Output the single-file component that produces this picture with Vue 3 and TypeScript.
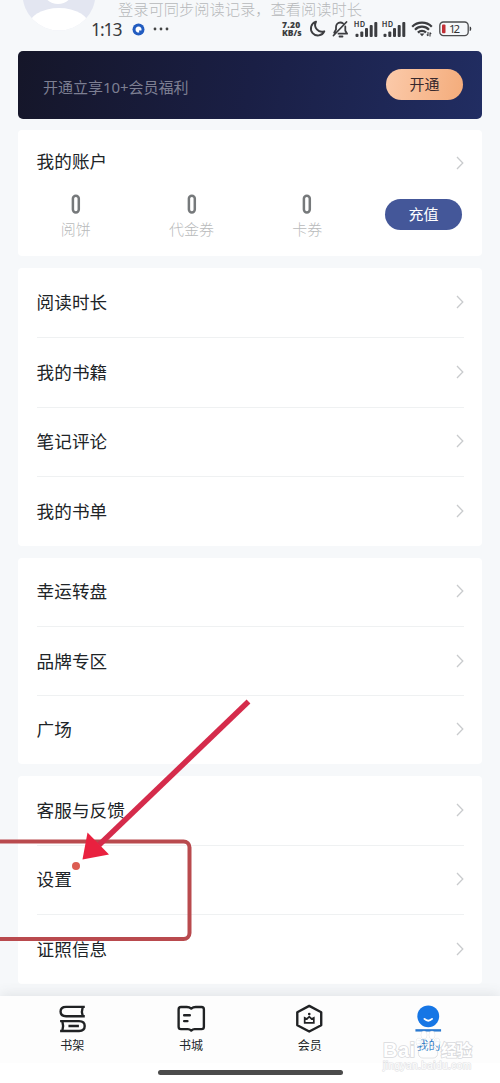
<script setup lang="ts">
interface Row {
  label: string
  dot?: boolean
}
interface Group {
  id: string
  rows: Row[]
}

const groups: Group[] = [
  { id: 'reading', rows: [{ label: '阅读时长' }, { label: '我的书籍' }, { label: '笔记评论' }, { label: '我的书单' }] },
  { id: 'explore', rows: [{ label: '幸运转盘' }, { label: '品牌专区' }, { label: '广场' }] },
  { id: 'support', rows: [{ label: '客服与反馈' }, { label: '设置', dot: true }, { label: '证照信息' }] },
]
const balances: string[] = ['阅饼', '代金券', '卡券']
const signals: number[] = [0, 1]
</script>

<template>
  <div class="screen">
    <header class="top">
      <svg class="avatar" width="74" height="31" viewBox="0 0 74 31">
        <defs><clipPath id="face"><circle cx="37" cy="-6" r="36.5" /></clipPath></defs>
        <g clip-path="url(#face)">
          <rect y="-43" width="74" height="74" fill="#e3e6f1" />
          <circle cx="36" cy="-12" r="16" fill="#fff" />
          <ellipse cx="37" cy="27" rx="31" ry="19" fill="#fff" />
        </g>
      </svg>
      <p class="hint">登录可同步阅读记录，查看阅读时长</p>
      <div class="status">
        <span class="clock">1:13</span>
        <svg class="app-dot" width="13" height="13" viewBox="0 0 13 13">
          <circle cx="6.5" cy="6.5" r="6" fill="#225cc0" />
          <path d="M6.5 3.5a3 3 0 1 0 .8 5.9L7 7.500h2.400A3 3 0 0 0 6.500 3.500Z" fill="#fff" />
        </svg>
        <svg class="more" width="16" height="4" viewBox="0 0 16 4" fill="#444">
          <circle cx="2" cy="2" r="1.4" /><circle cx="8" cy="2" r="1.4" /><circle cx="14" cy="2" r="1.4" />
        </svg>
        <span class="speed"><b>7.20</b><b>KB/s</b></span>
        <svg class="moon" width="17" height="18" viewBox="0 0 17 18">
          <path d="M7 1.7A7 7 0 1 0 15.3 11.3 6.8 6.8 0 0 1 7 1.7Z" fill="none" stroke="#3c3d40" stroke-width="1.9" stroke-linejoin="round" />
        </svg>
        <svg class="bell" width="17" height="18" viewBox="0 0 17 18" fill="none" stroke="#3c3d40" stroke-width="1.8" stroke-linecap="round" stroke-linejoin="round">
          <path d="M14.500 2 1.500 15.500M4 9.500V7.2C4 4.3 5.8 2.5 8.3 2.5c1 0 2 .3 2.7.9M13.3 6.5v4.2l1.8 3H6.5M4 9.500l-1.8 3.300M7.5 16.500h3" />
        </svg>
        <svg v-for="n in signals" :key="n" class="signal" width="24" height="17" viewBox="0 0 24 17">
          <text x="0" y="5.800" font-size="7" font-weight="700" fill="#3c3d40" textLength="11">HD</text>
          <g fill="#3c3d40">
            <rect x="1.5" y="12.8" width="3" height="3.2" rx="1" /><rect x="6.3" y="10.5" width="3" height="5.5" rx="1" />
            <rect x="11" y="7" width="3" height="9" rx="1" /><rect x="15.7" y="4" width="3" height="12" rx="1" />
            <rect x="20.3" y="1" width="3" height="15" rx="1" />
          </g>
        </svg>
        <svg class="wifi" width="22" height="18" viewBox="0 0 22 18" fill="none" stroke="#3c3d40" stroke-width="2.2">
          <path d="M1.2 6.7C6.5 1.3 15.500 1.3 20.800 6.700M4 9.700C8 5.700 14 5.700 18 9.700M6.900 12.600C9.300 10.200 12.700 10.200 15 12.600" />
          <path d="m8.500 13.500 2.500 2.800 2.500-2.800Z" fill="#3c3d40" stroke="none" />
          <path d="M17 12v4M19 12.500v4M15.800 14.500l1.200 1.500M20.200 14l-1.200-1.500" stroke-width="1.100" />
        </svg>
        <svg class="battery" width="33" height="16" viewBox="0 0 33 16">
          <rect x=".8" y="1" width="28.400" height="13.600" rx="3.600" fill="none" stroke="#4b4c4e" stroke-width="1.300" />
          <rect x="3" y="3.500" width="3.500" height="8.700" rx="1" fill="#c22f35" />
          <path d="M30.700 5.500q1.600 0 1.600 2.300t-1.600 2.300Z" fill="#3c3d40" />
          <text x="10" y="12" font-size="11.500" fill="#333" textLength="11">12</text>
        </svg>
      </div>
    </header>

    <main class="content">
      <section class="vip">
        <span class="vip-text">开通立享10+会员福利</span>
        <button class="pill open">开通</button>
      </section>

      <section class="card account">
        <div class="account-head">
          <span class="title">我的账户</span>
          <svg class="chevron" width="8" height="14" viewBox="0 0 8 14"><path d="m1 1 5.800 6L1 13" /></svg>
        </div>
        <div class="account-body">
          <div v-for="name in balances" :key="name" class="balance">
            <svg width="10" height="20" viewBox="0 0 10 20"><rect x="1.900" y="1.700" width="5.900" height="16.800" rx="2.900" fill="none" stroke="#76797b" stroke-width="2.500" /></svg>
            <span>{{ name }}</span>
          </div>
          <button class="pill charge">充值</button>
        </div>
      </section>

      <section v-for="g in groups" :key="g.id" class="card list" :class="g.id">
        <div v-for="r in g.rows" :key="r.label" class="row">
          <span class="title">{{ r.label }}<i v-if="r.dot" class="dot"></i></span>
          <svg class="chevron" width="8" height="14" viewBox="0 0 8 14"><path d="m1 1 5.800 6L1 13" /></svg>
        </div>
      </section>
    </main>

    <nav class="tabs">
      <div class="tab">
        <svg width="30" height="30" viewBox="0 0 30 30" fill="none" stroke="#202224" stroke-width="2.500" stroke-linejoin="round">
          <path d="M28.200 2.500H8.500C4.500 2.500 2.700 4.600 2.700 7.500s1.800 4.900 5.800 4.900h19.700M26 2.800q-1.600 4.700 0 9.300" transform="translate(0 .5)" />
          <path d="M2.200 18h20c4 0 5.900 2 5.900 5.200s-1.900 5.200-5.900 5.200h-20M4.600 18.300q1.600 5 0 9.800M11 23.200h11" />
        </svg>
        <span>书架</span>
      </div>
      <div class="tab">
        <svg width="30" height="30" viewBox="0 0 30 30" fill="none" stroke="#202224" stroke-width="2.500" stroke-linejoin="round" stroke-linecap="round">
          <path d="M15 4.800c-1.500-1.300-2.700-1.600-4.700-1.600H4.200c-1.600 0-2.500 1-2.500 2.500V24c0 1.600.9 2.500 2.500 2.500h7.300c1.500 0 2.300.4 3.500 1.500 1.200-1.100 2-1.500 3.500-1.500h7.300c1.600 0 2.500-.9 2.500-2.500V5.700c0-1.500-.9-2.500-2.500-2.500h-6.100c-2 0-3.200.3-4.700 1.600ZM7.500 11.800h6M7.500 18h3.500" />
        </svg>
        <span>书城</span>
      </div>
      <div class="tab">
        <svg width="30" height="30" viewBox="0 0 30 30" fill="none" stroke="#202224" stroke-width="2.500" stroke-linejoin="round">
          <path d="M15 2 27.600 8.700v13.600L15 29 2.400 22.300V8.700Z" />
          <path d="M10.200 14.500v5.300h9.600v-5.300l-2.400 1.200-2.400-2.400-2.400 2.400Z" stroke-width="1.800" stroke-linejoin="miter" /><circle cx="15" cy="10.500" r="1.400" fill="#202224" stroke="none" />
        </svg>
        <span>会员</span>
      </div>
      <div class="tab active">
        <svg width="30" height="30" viewBox="0 0 30 30">
          <circle cx="15" cy="13" r="11.500" fill="#1676e5" />
          <path d="M11 15.700q4 3.800 8 0" fill="none" stroke="#fff" stroke-width="2" stroke-linecap="round" />
          <rect x="1.500" y="26.500" width="27" height="2.500" fill="#2a79d0" />
        </svg>
        <span>我的</span>
      </div>
    </nav>
    <div class="home-area"><i></i></div>

    <svg class="overlay" width="500" height="1083" viewBox="0 0 500 1083">
      <rect x="-12" y="841.500" width="201.500" height="97.500" rx="6" fill="none" stroke="#b94a4e" stroke-width="4" />
      <path d="M248.500 701.500 99 845" stroke="#d52b4b" stroke-width="5.500" />
      <path d="M82.500 859.500 87.500 832.500 109 854.500Z" fill="#e9213f" />
      <g class="mark">
        <text x="383" y="1057" font-size="20" textLength="32">Bai</text>
        <text x="441" y="1056" font-size="16" textLength="31">经验</text>
        <text x="383" y="1069" font-size="10" textLength="88" class="site">jingyan.baidu.com</text>
        <g class="paw">
          <ellipse cx="419" cy="1042" rx="2.800" ry="3.800" /><ellipse cx="424" cy="1035" rx="2.800" ry="3.800" />
          <ellipse cx="432" cy="1035" rx="2.800" ry="3.800" /><ellipse cx="437" cy="1042" rx="2.800" ry="3.800" />
          <path d="M428 1043c-4 0-5 4-8 6-3 3-2 9 3 9h10c5 0 6-6 3-9-3-2-4-6-8-6Z" class="palm" />
        </g>
        <text x="421" y="1056.500" font-size="10" textLength="14" class="du">du</text>
      </g>
    </svg>
  </div>
</template>

<style>
body { margin: 0; }
</style>

<style scoped>
.screen {
  position: relative;
  width: 500px;
  height: 1083px;
  overflow: hidden;
  display: flex;
  flex-direction: column;
  background: #f6f8fa;
  color: #202427;
  font-family: "Noto Sans CJK SC", "Noto Sans", sans-serif;
}
.top { position: relative; height: 51px; flex: none; }
.avatar { position: absolute; left: 22px; top: 0; }
.hint {
  position: absolute;
  left: 118px;
  top: 0;
  margin: 0;
  font-size: 15.25px;
  line-height: 17px;
  color: #b7b9bb;
  font-weight: 300;
  white-space: nowrap;
}
.status {
  position: absolute;
  left: 91px;
  top: 18px;
  width: 382px;
  height: 22px;
  display: flex;
  align-items: center;
}
.status svg { flex: none; }
.clock { width: 41px; font-size: 17.500px; line-height: 22px; color: #3a3b3d; font-family: "Noto Sans", sans-serif; letter-spacing: -1.100px; }
.more { margin-left: 8px; }
.speed { display: flex; flex-direction: column; width: 27px; margin-left: 113px; font: 700 8.500px/8px "Open Sans", sans-serif; color: #3c3d40; align-items: flex-start; white-space: nowrap; }
.speed b:first-child { letter-spacing: .3px; }
.moon { margin-left: 0; }
.bell { margin-left: 6px; }
.signal { margin-left: 4px; font-family: Inter, sans-serif; overflow: visible; }
.bell + .signal { margin-left: 5px; }
.wifi { margin-left: 5px; }
.battery { margin-left: 6px; font-family: "Noto Sans", sans-serif; }
.content { display: flex; flex-direction: column; gap: 12px; padding: 0 18px; height: 945px; flex: none; box-sizing: border-box; }
.vip {
  height: 67.500px;
  margin-bottom: -.5px;
  border-radius: 5px;
  flex: none;
  box-sizing: border-box;
  padding: 0 19px 0 25px;
  display: flex;
  align-items: center;
  justify-content: space-between;
  background: linear-gradient(100deg, #151629 0%, #1a1f45 50%, #212d62 100%);
}
.vip-text { font-size: 15px; line-height: 20px; color: #7d7f92; padding-top: 4px; font-family: "Noto Sans", "Noto Sans CJK SC", sans-serif; letter-spacing: -.03px; }
.pill {
  border: 0;
  padding: 0;
  width: 77px;
  height: 31px;
  border-radius: 16px;
  font-family: inherit;
  font-size: 15px;
  line-height: 29px;
}
.open { background: linear-gradient(100deg, #fbcaaa, #f4ac7b); color: #38292d; padding-bottom: 2px; margin-top: -1px; }
.charge { position: absolute; right: 20px; top: 69px; background: #445799; color: #fff; padding-bottom: 2px; }
.card { background: #fff; border-radius: 4px; flex: none; }
.account { position: relative; height: 126px; box-sizing: border-box; padding: 17px 18px 0 19px; }
.account-head { display: flex; justify-content: space-between; align-items: center; height: 28px; }
.account-head .chevron { margin-top: 3px; }
.account-body { display: flex; margin-top: 19px; margin-left: -19px; }
.balance { width: 115.700px; display: flex; flex-direction: column; align-items: center; }
.balance svg { display: block; }
.balance span { margin-top: 3px; font-size: 15px; line-height: 24px; color: #b8babb; font-weight: 300; }
.title { position: relative; font-size: 17.600px; line-height: 26px; letter-spacing: .1px; }
.list { padding: 0 18px 0 19px; }
.row { height: 69.400px; box-sizing: border-box; display: flex; align-items: center; justify-content: space-between; padding-bottom: 1.500px; }
.row + .row { border-top: 1px solid #eff1f2; }
.explore .row { height: 68.800px; }
.support .row { height: 69.200px; }
.account .title, .row .title { margin-left: -.5px; }
.chevron { fill: none; stroke: #c9cbcd; stroke-width: 1.300; flex: none; }
.dot { position: absolute; left: 35px; top: -4px; width: 8px; height: 8px; border-radius: 50%; background: #dc5c52; }
.tabs {
  height: 67px;
  flex: none;
  box-sizing: border-box;
  padding: 0 13px 0 13px;
  display: grid;
  grid-template-columns: repeat(4, 118.700px);
  background: #fdfdfd;
  box-shadow: 0 -2px 12px rgba(70, 80, 90, .12);
}
.tab { display: flex; flex-direction: column; align-items: center; padding-top: 8px; font-size: 12px; line-height: 20px; }
.tab svg { flex: none; display: block; width: 28.500px; height: 28.500px; overflow: visible; }
.tab span { margin-top: 2px; color: inherit; }
.tab.active { color: #2a79c5; }
.home-area { height: 20px; background: #fff; display: flex; justify-content: center; position: relative; }
.home-area i { width: 185px; height: 5px; border-radius: 3px; background: #4b4b4b; margin-top: 7px; }
.overlay { position: absolute; left: 0; top: 0; pointer-events: none; }
.mark { fill: #fff; stroke: #d8d9dc; stroke-width: 1.600; paint-order: stroke; font-family: "Liberation Sans", "Noto Sans CJK SC", sans-serif; font-weight: 700; }
.mark .site { stroke: #e1e2e4; stroke-width: 1.200; font-weight: 400; }
.mark .paw { stroke-width: .8; fill-opacity: .9; }
.mark .palm { fill-opacity: .15; }
.mark .du { stroke: none; fill-opacity: .75; }
</style>
